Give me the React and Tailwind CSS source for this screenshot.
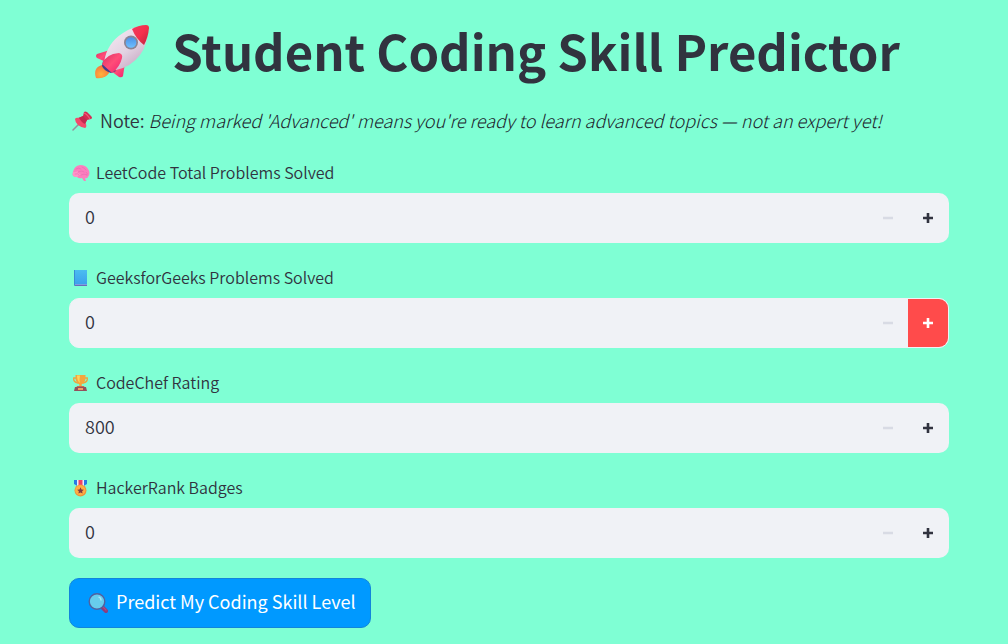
import { useState } from "react";

function Rocket({ className }) {
  return (
    <svg viewBox="0 0 56 56" className={className} aria-hidden="true">
      <defs>
        <linearGradient id="hull" x1="0.2" y1="0.1" x2="0.8" y2="0.9">
          <stop offset="0" stopColor="#f3e6f0" />
          <stop offset="0.55" stopColor="#e2d3e2" />
          <stop offset="1" stopColor="#c9a9c4" />
        </linearGradient>
        <linearGradient id="fin" x1="0" y1="0" x2="1" y2="1">
          <stop offset="0" stopColor="#d92f62" />
          <stop offset="0.5" stopColor="#ff4d78" />
          <stop offset="1" stopColor="#f0206f" />
        </linearGradient>
        <linearGradient id="nose" x1="0" y1="0" x2="1" y2="1">
          <stop offset="0" stopColor="#f03a60" />
          <stop offset="0.5" stopColor="#f5304c" />
          <stop offset="1" stopColor="#b92340" />
        </linearGradient>
        <radialGradient id="flame" cx="0.4" cy="0.7" r="0.7">
          <stop offset="0" stopColor="#ffb13d" />
          <stop offset="1" stopColor="#f5713b" />
        </radialGradient>
        <linearGradient id="pane" x1="0" y1="0" x2="0" y2="1">
          <stop offset="0" stopColor="#4a8fe6" />
          <stop offset="1" stopColor="#6fc0ff" />
        </linearGradient>
      </defs>
      <path d="M8 41C1 43 0 48 2 54C9 55 14 52 16 47Z" fill="url(#flame)" />
      <path d="M16 26L3 30Q1 32 3 34L12 38Z" fill="url(#fin)" />
      <path d="M31 39L29 52Q28 54 25 53L17 47Z" fill="url(#fin)" />
      <path d="M9 37L8 42Q10 47 17 49L22 47Z" fill="#443b8c" />
      <path d="M53 3Q55 19 46 31Q37 43 22 46L10 38Q13 19 29 9Q41 1 53 3Z" fill="url(#hull)" />
      <path d="M38 5Q45 1 52 1Q55 1 55 4Q54 14 50 21Q42 15 38 5Z" fill="url(#nose)" />
      <circle cx="37" cy="18.5" r="7" fill="#8a8494" />
      <circle cx="37" cy="18.5" r="5.3" fill="url(#pane)" />
      <path d="M8 40Q12 30 25 29Q29 30 28 34Q26 43 18 49Z" fill="url(#fin)" />
    </svg>
  );
}

function Pin({ className }) {
  return (
    <svg viewBox="0 0 20 20" className={className} aria-hidden="true">
      <path d="M8 12L1 19" stroke="#91939d" strokeWidth="1.5" strokeLinecap="round" />
      <path d="M12 1Q13 0 15 1L19 5Q21 7 19 8L15 9L13 13L6 7L11 5Z" fill="#d42d53" />
      <path d="M3 8Q4 6 7 7Q11 8 14 13Q15 16 13 17Q10 17 6 14Q3 11 3 8Z" fill="#f24a6c" />
      <path d="M7 7L11 5L15 9L13 13Q10 12 7 7Z" fill="#c32950" />
      <path d="M12 2Q15 3 18 8" stroke="#f35b79" strokeWidth="1.2" fill="none" />
    </svg>
  );
}

function Brain({ className }) {
  return (
    <svg viewBox="0 0 18 18" className={className} aria-hidden="true">
      <path d="M1 8Q2 2 8 1Q14 1 16 5Q19 9 16 13Q15 15 13 14L14 17L12 17L10 14Q7 15 5 13Q-1 13 1 8Z" fill="#fb7fbe" />
      <path d="M1 8Q0 13 5 13L9 10Q5 10 6 7Q2 9 1 8Z" fill="#ff94c8" />
      <path d="M4 5Q7 3 9 5M6 8Q10 6 12 8M3 10Q6 9 7 11M10 3Q13 4 14 6M9 11Q12 9 15 11M14 8Q16 9 15 11" fill="none" stroke="#e866b2" strokeWidth="0.6" strokeLinecap="round" />
    </svg>
  );
}

function Book({ className }) {
  return (
    <svg viewBox="0 0 18 18" className={className} aria-hidden="true">
      <defs>
        <linearGradient id="cover" x1="0" y1="0" x2="0" y2="1">
          <stop offset="0" stopColor="#4bbdf0" />
          <stop offset="1" stopColor="#3ba2ec" />
        </linearGradient>
      </defs>
      <path d="M2 1H15V17H3Q2 17 2 16Z" fill="#3b8bd3" />
      <path d="M3 15H15V16.4H3Z" fill="#a59bdc" />
      <path d="M3 1H15V15.4H3Z" fill="url(#cover)" />
      <path d="M3 16.3H15V17H3Z" fill="#6d59b1" />
    </svg>
  );
}

function Trophy({ className }) {
  return (
    <svg viewBox="0 0 18 18" className={className} aria-hidden="true">
      <path d="M4 4H1.7Q1 8 6 9M13 4H15.3Q16 8 11 9" fill="none" stroke="#eda341" strokeWidth="1.3" />
      <path d="M3.5 1H13.5Q14 9 9.7 10.3V13H7.3V10.3Q3 9 3.5 1Z" fill="#f5a63d" />
      <path d="M5 1.5H8Q7 6 8 9Q5 7 5 1.5Z" fill="#ffd45c" />
      <path d="M5 12H12L13 14H4Z" fill="#c66c51" />
      <path d="M3 13H14L15 17H2Z" fill="#94515d" />
      <path d="M6 14H11V16H6Z" fill="#eda464" />
    </svg>
  );
}

function Medal({ className }) {
  return (
    <svg viewBox="0 0 18 18" className={className} aria-hidden="true">
      <path d="M2 1H15V5L10 8H7L2 5Z" fill="#2879e6" />
      <path d="M5 1H12V7H5Z" fill="#e9eefa" />
      <path d="M6.5 1H10.5V7H6.5Z" fill="#ef4267" />
      <circle cx="8.5" cy="11.5" r="6" fill="#ec943b" />
      <circle cx="8.3" cy="11.3" r="5" fill="#ffae43" />
      <path d="M8.5 8.3L9.5 10.5L11.9 10.7L10.1 12.3L10.6 14.6L8.5 13.4L6.4 14.6L6.9 12.3L5.1 10.7L7.5 10.5Z" fill="#7d3b43" />
    </svg>
  );
}

function Magnifier({ className }) {
  return (
    <svg viewBox="0 0 20 20" className={className} aria-hidden="true">
      <path d="M14 14L18 18" stroke="#8d3d7c" strokeWidth="4" strokeLinecap="round" />
      <path d="M14.5 13.5L18 17" stroke="#b14b80" strokeWidth="1.2" strokeLinecap="round" />
      <circle cx="9" cy="8.5" r="7.8" fill="#67cdec" stroke="#51619f" strokeWidth="1.4" />
      <path d="M11 4.2Q13 5 13 7" stroke="#aae7f8" strokeWidth="1.4" fill="none" strokeLinecap="round" />
    </svg>
  );
}

function StepIcon({ plus }) {
  return (
    <svg viewBox="0 0 10 10" className="size-[10px]" fill="currentColor" aria-hidden="true">
      <path d="M0 3.7H10V6.3H0Z" />
      {plus && <path d="M3.7 0H6.3V10H3.7Z" />}
    </svg>
  );
}

function NumberField({ id, label, icon: Icon, min, highlighted = false }) {
  const [value, setValue] = useState(min);
  return (
    <div>
      <label htmlFor={id} className="mb-[5px] flex h-[30px] items-center gap-[6px] pl-[3px] text-base">
        <Icon className="size-[18px] shrink-0" />
        <span className="pb-0.5 font-[350]">{label}</span>
      </label>
      <div
        className={`flex h-[50px] overflow-hidden rounded-[10px] border bg-[#f0f2f6] ${
          highlighted ? "border-[#f0f2f6]" : "border-transparent"
        }`}
      >
        <input
          id={id}
          type="text"
          inputMode="numeric"
          value={value}
          onChange={(e) => setValue(Number(e.target.value) || min)}
          className="min-w-0 flex-1 bg-transparent px-[15px] pb-1 text-lg font-[350] outline-none"
        />
        <button
          type="button"
          aria-label={`Decrease ${label}`}
          disabled={value <= min}
          onClick={() => setValue(value - 1)}
          className="flex w-10 items-center justify-center disabled:text-[#d8dbe4]"
        >
          <StepIcon />
        </button>
        <button
          type="button"
          aria-label={`Increase ${label}`}
          onClick={() => setValue(value + 1)}
          className={`flex w-10 items-center justify-center ${highlighted ? "bg-[#ff4b4b] text-white" : ""}`}
        >
          <StepIcon plus />
        </button>
      </div>
    </div>
  );
}

export default function App() {
  return (
    <main className="min-h-screen bg-[#7fffd4] pt-[15px] pr-[59px] pb-4 pl-[69px] font-['Noto_Sans_CJK_SC',sans-serif] text-[#31333f]">
      <h1 className="flex items-center justify-center gap-[22px] pr-6 text-[49px] leading-[70px] font-bold whitespace-nowrap">
        <Rocket className="size-14 shrink-0" />
        <span className="pb-1">Student Coding Skill Predictor</span>
      </h1>
      <p className="mt-4 flex items-center gap-2 pl-[3px] text-lg leading-[30px]">
        <Pin className="size-5 shrink-0" />
        <span className="pb-0.5 font-[350]">
          Note:{" "}
          <em className="font-light text-[#20222c]">
            Being marked 'Advanced' means you're ready to learn advanced topics — not an expert yet!
          </em>
        </span>
      </p>
      <form className="mt-[21px] flex flex-col gap-5" onSubmit={(e) => e.preventDefault()}>
        <NumberField id="leetcode" label="LeetCode Total Problems Solved" icon={Brain} min={0} />
        <NumberField id="gfg" label="GeeksforGeeks Problems Solved" icon={Book} min={0} highlighted />
        <NumberField id="codechef" label="CodeChef Rating" icon={Trophy} min={800} />
        <NumberField id="hackerrank" label="HackerRank Badges" icon={Medal} min={0} />
        <button
          type="submit"
          className="flex h-[50px] items-center gap-2 self-start rounded-[10px] border border-[#1285da] bg-[#0099ff] pr-[14px] pl-[18px] text-lg font-normal text-white"
        >
          <Magnifier className="size-5 shrink-0" />
          <span className="pb-1">Predict My Coding Skill Level</span>
        </button>
      </form>
    </main>
  );
}
